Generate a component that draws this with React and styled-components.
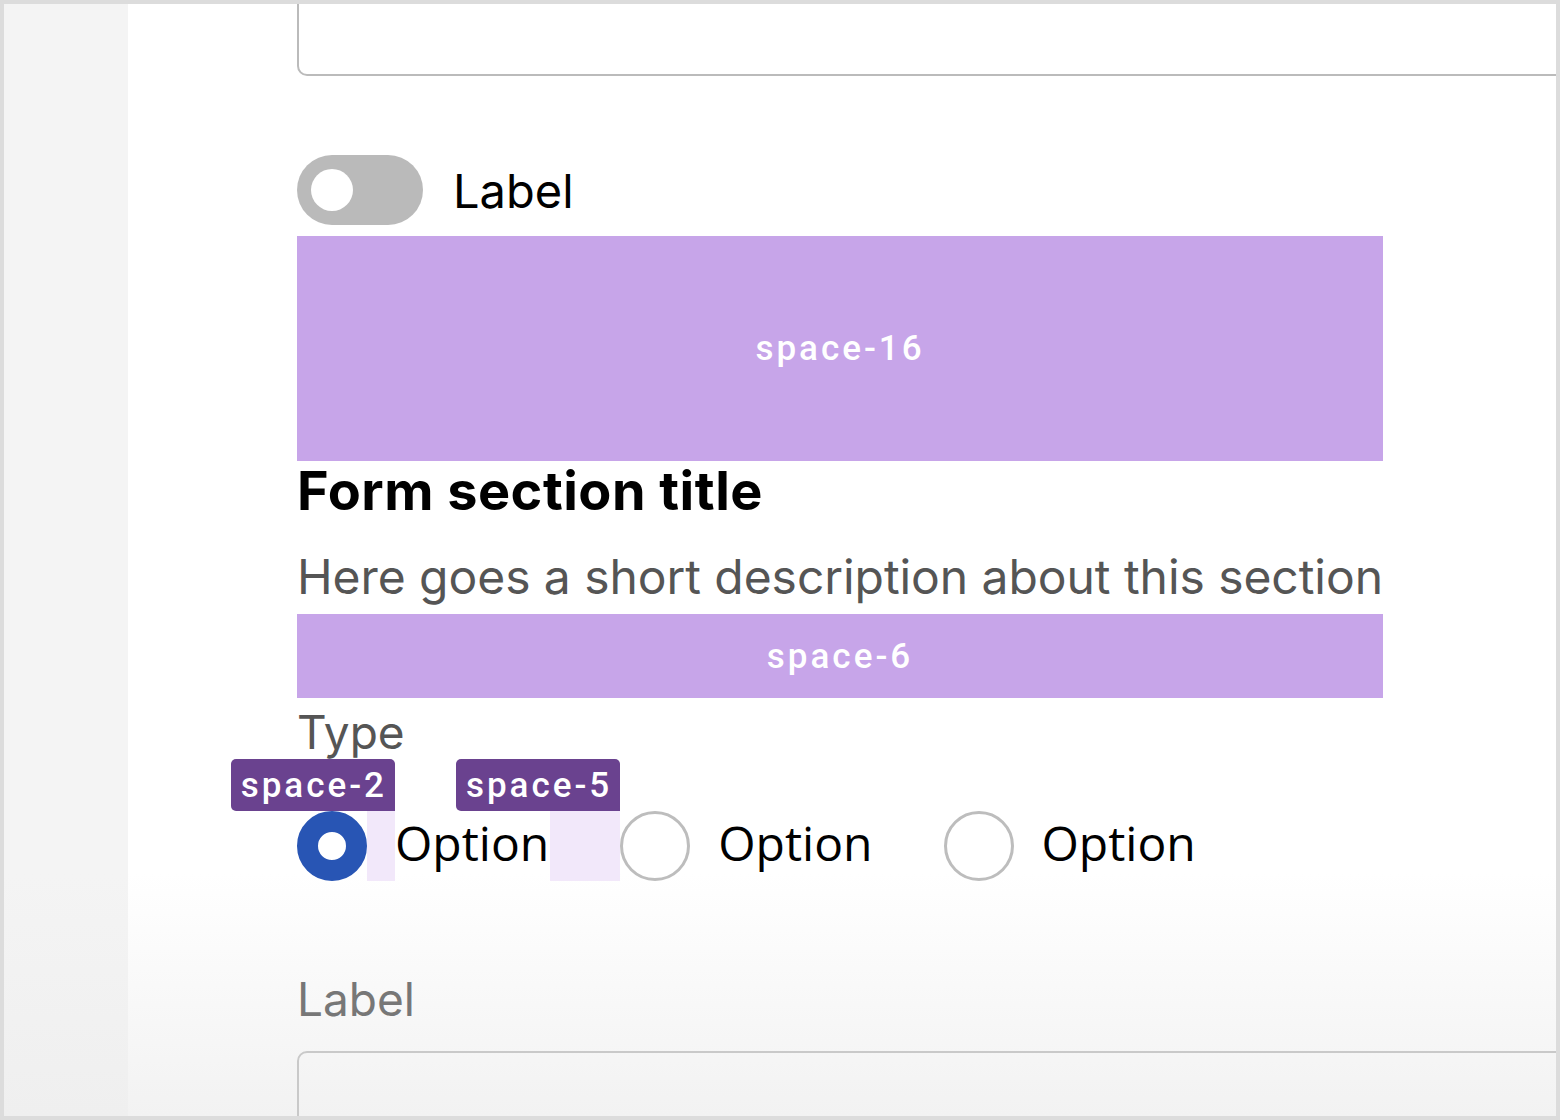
import React from "react";
import styled, { createGlobalStyle } from "styled-components";

const Global = createGlobalStyle`
  html, body { margin: 0; padding: 0; }
  body { background: #dcdcdc; font-family: Inter, "Noto Sans", sans-serif; }
  * { box-sizing: border-box; }
`;

const Frame = styled.div`
  width: 1560px;
  height: 1120px;
  padding: 4px;
  background: #dcdcdc;
`;

const Screen = styled.div`
  display: flex;
  width: 100%;
  height: 100%;
  overflow: hidden;
`;

const SideStrip = styled.aside`
  flex: 0 0 124px;
  background: linear-gradient(to bottom, #f4f4f4 0, #f4f4f4 870px, #efefef 100%);
`;

const Main = styled.main`
  flex: 1;
  padding-left: 169px;
  display: flex;
  flex-direction: column;
  align-items: flex-start;
  background: linear-gradient(to bottom, #ffffff 0, #ffffff 870px, #f2f2f2 100%);
  & > * {
    flex-shrink: 0;
  }
`;

const Input = styled.div`
  width: 1400px;
  height: ${(p) => p.$h}px;
  border: 2px solid ${(p) => p.$border || "#bbbbbb"};
  border-radius: 10px;
  background: transparent;
  margin-top: ${(p) => p.$mt || 0}px;
`;

const ToggleRow = styled.label`
  display: flex;
  align-items: center;
  gap: 30px;
  margin-top: 79px;
  height: 70px;
`;

const Toggle = styled.span`
  width: 126px;
  height: 70px;
  border-radius: 35px;
  background: #bababa;
  display: flex;
  align-items: center;
  padding-left: 14px;
  &::before {
    content: "";
    width: 42px;
    height: 42px;
    border-radius: 50%;
    background: #ffffff;
  }
`;

const ToggleText = styled.span`
  font-size: 47px;
  line-height: 1;
  color: #000;
  font-weight: 400;
`;

const SpaceBlock = styled.div`
  width: 1086px;
  height: ${(p) => p.$h}px;
  margin-top: ${(p) => p.$mt || 0}px;
  background: #c7a5e9;
  display: flex;
  align-items: center;
  justify-content: center;
  color: #ffffff;
  font-family: Roboto, "Noto Sans", sans-serif;
  font-weight: 500;
  font-size: 35px;
  letter-spacing: 3px;
`;

const Title = styled.h2`
  margin: 0;
  font-size: 54px;
  line-height: 60px;
  font-weight: 700;
  color: #000;
  letter-spacing: 0.5px;
`;

const Description = styled.p`
  margin: 27px 0 0;
  font-size: 48px;
  line-height: 58px;
  color: #555555;
  letter-spacing: -0.06px;
  white-space: nowrap;
`;

const FieldLabel = styled.div`
  margin-top: ${(p) => p.$mt || 0}px;
  font-size: 46px;
  line-height: 56px;
  color: ${(p) => p.$color || "#555555"};
`;

const RadioGroup = styled.div`
  display: flex;
  align-items: center;
  height: 70px;
  margin-top: 51px;
`;

const Radio = styled.span`
  flex: 0 0 70px;
  width: 70px;
  height: 70px;
  border-radius: 50%;
  border: ${(p) => (p.$checked ? "21px solid #2855b4" : "3px solid #bdbdbd")};
  background: #fff;
`;

const Spacer = styled.span`
  position: relative;
  flex: 0 0 ${(p) => p.$w}px;
  height: 70px;
  background: ${(p) => (p.$marked ? "#f2e8fa" : "transparent")};
`;

const Badge = styled.span`
  position: absolute;
  right: 0;
  bottom: 100%;
  height: 52px;
  padding: 0 8px 0 10px;
  display: flex;
  align-items: center;
  white-space: nowrap;
  background: #6a428f;
  color: #ffffff;
  border-radius: 5px 5px 0 5px;
  font-family: Roboto, "Noto Sans", sans-serif;
  font-weight: 500;
  font-size: 35px;
  letter-spacing: 3px;
`;

const OptionText = styled.span`
  font-family: "Open Sans", "Noto Sans", sans-serif;
  font-size: 48px;
  line-height: 64px;
  padding-bottom: 6px;
  color: #000;
  padding-right: 1px;
`;

const options = [
  { checked: true, inner: "space-2", outer: "space-5" },
  { checked: false },
  { checked: false, last: true },
];

export default function App() {
  return (
    <>
      <Global />
      <Frame>
        <Screen>
          <SideStrip />
          <Main>
            <Input $h={92} $mt={-20} />
            <ToggleRow>
              <Toggle />
              <ToggleText>Label</ToggleText>
            </ToggleRow>
            <SpaceBlock $h={225} $mt={11}>space-16</SpaceBlock>
            <Title>Form section title</Title>
            <Description>Here goes a short description about this section</Description>
            <SpaceBlock $h={84} $mt={8}>space-6</SpaceBlock>
            <FieldLabel $mt={6}>Type</FieldLabel>
            <RadioGroup>
              {options.map((o, i) => (
                <React.Fragment key={i}>
                  <Radio $checked={o.checked} />
                  <Spacer $w={28} $marked={!!o.inner}>
                    {o.inner && <Badge>{o.inner}</Badge>}
                  </Spacer>
                  <OptionText>Option</OptionText>
                  {!o.last && (
                    <Spacer $w={70} $marked={!!o.outer}>
                      {o.outer && <Badge>{o.outer}</Badge>}
                    </Spacer>
                  )}
                </React.Fragment>
              ))}
            </RadioGroup>
            <FieldLabel $mt={90} $color="#777777">Label</FieldLabel>
            <Input $h={120} $mt={24} $border="#c9c9c9" />
          </Main>
        </Screen>
      </Frame>
    </>
  );
}
